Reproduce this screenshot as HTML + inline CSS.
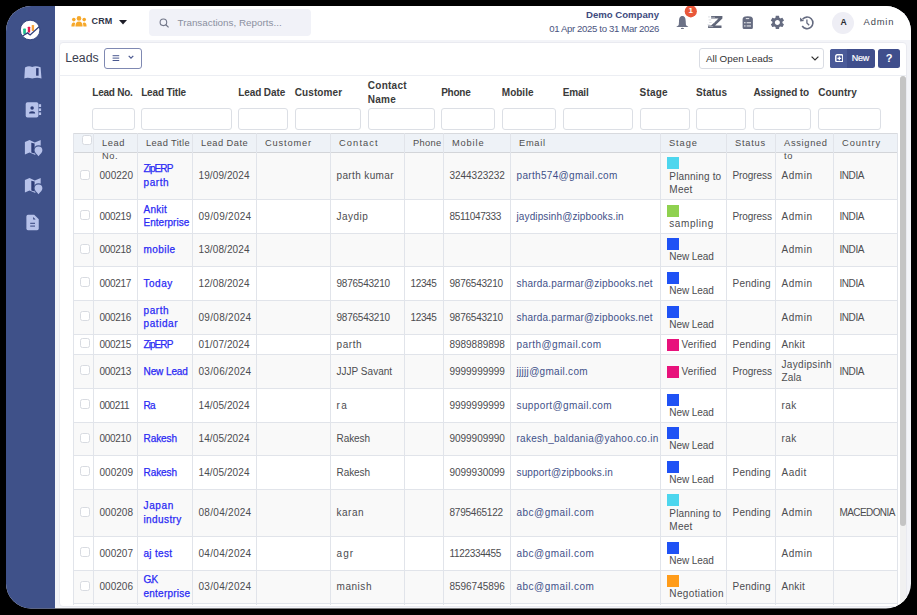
<!DOCTYPE html>
<html><head><meta charset="utf-8">
<style>
html,body{margin:0;padding:0;}
body{width:917px;height:615px;background:#000;overflow:hidden;position:relative;font-family:"Liberation Sans",sans-serif;}
#frame{position:absolute;left:0;top:0;width:917px;height:615px;background:#f3f4f8;clip-path:inset(6px 6px 6.6px 6px round 25px);overflow:hidden;}
#frame div{position:absolute;}
.side{left:0;top:0;width:55px;height:615px;background:#3f5189;}
.hdr{left:55px;top:0;width:862px;height:40px;background:#fff;}
.panel{left:58.5px;top:41.5px;width:848px;height:565px;background:#fff;border:1px solid #e9eaf0;border-radius:4px;box-sizing:border-box;}
.sep{left:59px;top:74.5px;width:847px;height:1px;background:#eceef3;}
.thead{left:73px;width:825px;background:#eef2f7;}
.trow{left:73px;width:825px;}
.hl{left:73px;width:825px;height:1px;background:#e1e4ea;}
.hl.hd{background:#d3d5d9;}
.hl.ht{background:#d8dade;}
.vl{top:133px;width:1px;height:472px;background:#e1e4ea;}
.th{font-size:9.3px;line-height:13.8px;color:#4e4e4e;white-space:nowrap;}
.td{font-size:10px;line-height:13.6px;color:#4c4c50;white-space:nowrap;}
.lk{color:#2a2af4;-webkit-text-stroke:0.25px #2a2af4;}
.em{color:#3f5189;}
.cb{width:10px;height:10px;border:1px solid #d8dbe1;border-radius:2.5px;background:#fff;box-sizing:border-box;}
.sq{width:12px;height:12px;}
.fl{font-size:10px;line-height:13.6px;font-weight:bold;color:#3a3a3a;white-space:nowrap;}
.inp{top:108px;height:21.8px;border:1px solid #dcdfe5;border-radius:3px;box-sizing:border-box;background:#fff;}
.track{left:900px;top:80px;width:5.8px;height:525px;background:#f1f1f1;}
.scroll{left:900px;top:76.4px;width:5.8px;height:449.3px;background:#c4c4c4;border-radius:3px;}
.ico{color:#5b6275;}
</style></head>
<body>
<div id="frame">
  <div class="side"></div>
  <!-- logo -->
  <svg style="position:absolute;left:19px;top:18.5px" width="22" height="22" viewBox="0 0 22 22">
    <circle cx="11.1" cy="11" r="9.8" fill="#fff" stroke="#2f3f7a" stroke-width="0.9"/>
    <rect x="4.2" y="9.6" width="2.7" height="5.3" rx="0.6" fill="#1fc08e"/>
    <rect x="8.8" y="7.7" width="2.4" height="5.9" rx="0.6" fill="#e8174f"/>
    <rect x="12.7" y="6" width="2.4" height="5.9" rx="0.6" fill="#f7a23a"/>
    <path d="M3.6 17 L8.5 13.9 L11.1 15.9 L20.4 7.5" fill="none" stroke="#2f3f7a" stroke-width="1.3"/>
  </svg>
  <!-- sidebar icons -->
  <svg style="position:absolute;left:20px;top:62px" width="26" height="22" viewBox="0 0 26 22">
    <path d="M4.3 16.4 L5 5.4 Q8.9 3.4 12.2 5 Q15.6 3.4 20.6 5.2 L21.5 16.4 Q16.8 15.2 12.2 16.6 Q7.8 15.2 4.3 16.4 Z" fill="#b7c2ea"/>
    <rect x="16.1" y="6.1" width="2.5" height="7.6" fill="#2f3e78"/>
  </svg>
  <svg style="position:absolute;left:20px;top:98px" width="26" height="24" viewBox="0 0 26 24">
    <rect x="5.7" y="4.3" width="12.7" height="15.2" rx="1.8" fill="#b7c2ea"/>
    <rect x="18.8" y="6.2" width="2.3" height="2.8" fill="#b7c2ea"/>
    <rect x="18.8" y="10.4" width="2.3" height="2.6" fill="#b7c2ea"/>
    <rect x="18.8" y="14.4" width="2.3" height="2.6" fill="#b7c2ea"/>
    <circle cx="12.1" cy="10" r="1.75" fill="#2f3e78"/>
    <path d="M9 15.6 Q9.2 13.3 12.1 13.3 Q15 13.3 15.2 15.6 Z" fill="#2f3e78"/>
  </svg>
  <svg style="position:absolute;left:20px;top:136px" width="28" height="24" viewBox="0 0 28 24">
    <path d="M4.9 5.9 L9.5 3.9 L14.8 6.4 L20.7 3.9 L20.7 16 L14.8 18.8 L9.5 16.4 L4.9 18.4 Z" fill="#b7c2ea"/>
    <path d="M11.3 6.8 L14.6 7.6 L14.6 17.4 L11.3 16.6 Z" fill="#2f3e78"/>
    <path d="M18.5 21.4 C16.2 19 13.4 16.8 13.4 14.3 A5.1 5.1 0 1 1 23.6 14.3 C23.6 16.8 20.8 19 18.5 21.4 Z" fill="#3f5189"/>
    <path d="M18.5 20.2 C16.5 18 14.6 16.4 14.6 14.3 A3.9 3.9 0 1 1 22.4 14.3 C22.4 16.4 20.5 18 18.5 20.2 Z" fill="#b7c2ea"/>
  </svg>
  <svg style="position:absolute;left:20px;top:173.5px" width="28" height="24" viewBox="0 0 28 24">
    <path d="M4.9 5.9 L9.5 3.9 L14.8 6.4 L20.7 3.9 L20.7 16 L14.8 18.8 L9.5 16.4 L4.9 18.4 Z" fill="#b7c2ea"/>
    <path d="M11.3 6.8 L14.6 7.6 L14.6 17.4 L11.3 16.6 Z" fill="#2f3e78"/>
    <path d="M18.5 21.4 C16.2 19 13.4 16.8 13.4 14.3 A5.1 5.1 0 1 1 23.6 14.3 C23.6 16.8 20.8 19 18.5 21.4 Z" fill="#3f5189"/>
    <path d="M18.5 20.2 C16.5 18 14.6 16.4 14.6 14.3 A3.9 3.9 0 1 1 22.4 14.3 C22.4 16.4 20.5 18 18.5 20.2 Z" fill="#b7c2ea"/>
  </svg>
  <svg style="position:absolute;left:20px;top:210px" width="26" height="24" viewBox="0 0 26 24">
    <path d="M8 4.7 L14.2 4.7 L18.75 9.2 L18.75 18.6 Q18.75 20.3 17 20.3 L8 20.3 Q6.4 20.3 6.4 18.6 L6.4 6.4 Q6.4 4.7 8 4.7 Z" fill="#b7c2ea"/>
    <path d="M13.2 7 L15.6 9.6 L13.2 9.6 Z" fill="#2f3e78"/>
    <rect x="10.2" y="12.8" width="4.8" height="0.95" fill="#2f3e78"/>
    <rect x="10.2" y="15.6" width="4.8" height="0.95" fill="#2f3e78"/>
  </svg>

  <div class="hdr"></div>
  <!-- CRM -->
  <svg style="position:absolute;left:71px;top:15.5px" width="16" height="11" viewBox="0 0 16 11">
    <circle cx="8" cy="2.4" r="2.3" fill="#f6a82a"/>
    <circle cx="2.8" cy="3.6" r="1.8" fill="#f6a82a"/>
    <circle cx="13.2" cy="3.6" r="1.8" fill="#f6a82a"/>
    <path d="M4.4 10.6 Q4.4 5.6 8 5.6 Q11.6 5.6 11.6 10.6 Z" fill="#f6a82a"/>
    <path d="M0.4 10.6 Q0.4 6.6 2.8 6.6 Q3.8 6.6 4.2 7.2 Q3.6 8.4 3.6 10.6 Z" fill="#f6a82a"/>
    <path d="M15.6 10.6 Q15.6 6.6 13.2 6.6 Q12.2 6.6 11.8 7.2 Q12.4 8.4 12.4 10.6 Z" fill="#f6a82a"/>
  </svg>
  <div style="left:91.6px;top:15.4px;font-size:9px;font-weight:bold;color:#2f3547;line-height:13px;letter-spacing:0.1px">CRM</div>
  <svg style="position:absolute;left:119px;top:19.5px" width="8" height="5" viewBox="0 0 8 5"><path d="M0 0 L8 0 L4 4.6 Z" fill="#1d1d28"/></svg>
  <!-- search -->
  <div style="left:149px;top:9px;width:162px;height:26.6px;background:#f1f2f8;border-radius:4px"></div>
  <svg style="position:absolute;left:159px;top:18px" width="11" height="10" viewBox="0 0 11 10">
    <circle cx="4.4" cy="4.3" r="3.3" fill="none" stroke="#727789" stroke-width="1.1"/>
    <path d="M6.8 6.7 L9.6 9.4" stroke="#727789" stroke-width="1.2"/>
  </svg>
  <div style="left:177.5px;top:15.8px;font-size:9.85px;color:#8b90a0;line-height:13px">Transactions, Reports...</div>
  <!-- company -->
  <div style="left:585px;top:9.4px;width:74px;text-align:right;font-size:9.6px;font-weight:bold;color:#3d4a7e;line-height:12px;white-space:nowrap">Demo Company</div>
  <div style="left:549px;top:22.6px;width:110px;text-align:right;font-size:9.6px;color:#4a5480;line-height:12px;white-space:nowrap;letter-spacing:-0.35px">01 Apr 2025 to 31 Mar 2026</div>
  <!-- bell -->
  <svg style="position:absolute;left:672px;top:4px" width="30" height="30" viewBox="0 0 30 30">
    <path d="M10.35 11.9 C7.7 11.9 7.1 14.4 7 17 L6.8 20.4 C6.7 21.5 5.5 22 4.6 22.5 L4.6 22.9 L16.1 22.9 L16.1 22.5 C15.2 22 14 21.5 13.9 20.4 L13.7 17 C13.6 14.4 13 11.9 10.35 11.9 Z" fill="#6b7186"/>
    <ellipse cx="10.4" cy="24.4" rx="1.6" ry="0.55" fill="#6b7186"/>
    <circle cx="18.8" cy="7.3" r="6.1" fill="#e9573a"/>
  </svg>
  <div style="left:684.8px;top:5.4px;width:12px;text-align:center;color:#fff;font-size:8px;font-weight:bold;line-height:12px">1</div>
  <!-- Z icon -->
  <svg style="position:absolute;left:702px;top:10px" width="28" height="24" viewBox="0 0 28 24">
    <path d="M9.1 6.1 L20.4 6.1 L20.4 8.5 L13.1 15.5 L19.5 15.5 L19.5 18 L6.1 18 L6.1 15.5 L9.1 15.5 L16.5 8.5 L9.1 8.5 Z" fill="#5f6578"/>
    <rect x="8.6" y="6.9" width="4.4" height="0.55" fill="#fff" opacity="0.8"/>
    <rect x="6.6" y="16.5" width="4.6" height="0.55" fill="#fff" opacity="0.8"/>
    <rect x="11" y="10.6" width="3.6" height="0.5" fill="#fff" opacity="0.7"/>
    <rect x="9.4" y="12.6" width="3.6" height="0.5" fill="#fff" opacity="0.7"/>
    <rect x="6" y="6.6" width="2.2" height="0.7" fill="#c9ccd4"/>
    <rect x="6.6" y="9.6" width="2.6" height="0.7" fill="#c9ccd4"/>
    <rect x="7.2" y="12.2" width="2.4" height="0.7" fill="#c9ccd4"/>
    <rect x="5.4" y="14.4" width="2.4" height="0.7" fill="#d5d7de"/>
  </svg>
  <!-- calculator -->
  <svg style="position:absolute;left:742px;top:15.5px" width="11.5" height="14" viewBox="0 0 11.5 14">
    <path d="M0.6 3.6 Q0.6 0.8 3.4 0.5 Q5.75 0.1 8.1 0.5 Q10.9 0.8 10.9 3.6 L10.9 11.6 Q10.9 13.1 9.4 13.1 L2.1 13.1 Q0.6 13.1 0.6 11.6 Z" fill="#656b80"/>
    <rect x="3.8" y="2.1" width="3.4" height="1" fill="#fff" opacity="0.85"/>
    <rect x="2" y="6.2" width="1.6" height="1.1" fill="#fff" opacity="0.85"/>
    <rect x="4.6" y="6.2" width="4.4" height="1.1" fill="#fff" opacity="0.85"/>
    <rect x="2" y="9.4" width="1.6" height="1.1" fill="#fff" opacity="0.85"/>
    <rect x="4.6" y="9.4" width="4.4" height="1.1" fill="#fff" opacity="0.85"/>
  </svg>
  <!-- gear -->
  <svg style="position:absolute;left:768.7px;top:14.3px" width="16.8" height="16.8" viewBox="0 0 24 24">
    <path fill="#656b80" d="M19.14 12.94c.04-.3.06-.61.06-.94 0-.32-.02-.64-.07-.94l2.03-1.58a.49.49 0 0 0 .12-.61l-1.92-3.32a.488.488 0 0 0-.59-.22l-2.39.96c-.5-.38-1.03-.7-1.62-.94l-.36-2.54a.484.484 0 0 0-.48-.41h-3.84c-.24 0-.43.17-.47.41l-.36 2.54c-.59.24-1.13.57-1.62.94l-2.39-.96c-.22-.08-.47 0-.59.22L2.74 8.87c-.12.21-.08.47.12.61l2.03 1.58c-.05.3-.09.63-.09.94s.02.64.07.94l-2.03 1.58a.49.49 0 0 0-.12.61l1.92 3.32c.12.22.37.29.59.22l2.39-.96c.5.38 1.03.7 1.62.94l.36 2.54c.05.24.24.41.48.41h3.84c.24 0 .44-.17.47-.41l.36-2.54c.59-.24 1.13-.56 1.62-.94l2.39.96c.22.08.47 0 .59-.22l1.92-3.32c.12-.22.07-.47-.12-.61l-2.01-1.58zM12 15.6c-1.98 0-3.6-1.62-3.6-3.6s1.62-3.6 3.6-3.6 3.6 1.62 3.6 3.6-1.62 3.6-3.6 3.6z"/>
  </svg>
  <!-- history -->
  <svg style="position:absolute;left:799px;top:15px" width="15" height="15" viewBox="0 0 15 15">
    <path d="M3.6 4.2 A5.8 5.8 0 1 1 3.2 11" fill="none" stroke="#656b80" stroke-width="1.6"/>
    <path d="M1 2.6 L1.2 6.6 L5.2 6 Z" fill="#656b80"/>
    <path d="M7.9 4.6 L7.9 8 L10.2 10.2" fill="none" stroke="#656b80" stroke-width="1.3"/>
  </svg>
  <!-- avatar -->
  <div style="left:832px;top:11.5px;width:22px;height:22px;border-radius:50%;background:#eeeef5"></div>
  <div style="left:832.6px;top:16.3px;width:22px;text-align:center;font-size:8.6px;font-weight:bold;color:#2a2a30;line-height:12px">A</div>
  <div style="left:863.6px;top:15.9px;font-size:9.4px;color:#42464f;line-height:12px;letter-spacing:0.8px">Admin</div>

  <div class="panel"></div>
  <div style="left:65.2px;top:50.9px;font-size:12.3px;color:#3a4050;line-height:14px;letter-spacing:0px">Leads</div>
  <div style="left:104px;top:48.3px;width:38px;height:20.3px;border:1.3px solid #7f89b2;border-radius:3px;box-sizing:border-box"></div>
  <svg style="position:absolute;left:111.5px;top:54.1px" width="8" height="8" viewBox="0 0 8 8">
    <rect x="0.6" y="1.2" width="6.6" height="1" fill="#4a5890"/>
    <rect x="0.6" y="3.6" width="6.6" height="1" fill="#4a5890"/>
    <rect x="0.6" y="6" width="6.6" height="1" fill="#4a5890"/>
  </svg>
  <svg style="position:absolute;left:127.6px;top:55.4px" width="6" height="4.4" viewBox="0 0 6 4.4"><path d="M0.7 0.8 L3 3.2 L5.3 0.8" fill="none" stroke="#4a5890" stroke-width="1.2"/></svg>

  <!-- select -->
  <div style="left:699.4px;top:48.2px;width:125px;height:20.5px;border:1px solid #d9dce3;border-radius:3px;box-sizing:border-box;background:#fff"></div>
  <div style="left:706px;top:51.5px;font-size:9.8px;color:#333;line-height:13px">All Open Leads</div>
  <svg style="position:absolute;left:810.5px;top:55.5px" width="8" height="5" viewBox="0 0 8 5"><path d="M0.6 0.6 L4 4 L7.4 0.6" fill="none" stroke="#333" stroke-width="1.2"/></svg>
  <!-- New button -->
  <div style="left:830px;top:49px;width:45px;height:18.7px;background:#3f4e8c;border-radius:2.5px"></div>
  <div style="left:830px;top:49px;width:17px;height:18.7px;background:#4a5a98;border-radius:2.5px 0 0 2.5px"></div>
  <svg style="position:absolute;left:834.8px;top:53.8px" width="8.6" height="8.6" viewBox="0 0 10 10">
    <rect x="0.9" y="0.9" width="8.2" height="8.2" rx="1.6" fill="none" stroke="#fff" stroke-width="1.7"/>
    <path d="M5 2.8 L5 7.2 M2.8 5 L7.2 5" stroke="#fff" stroke-width="1.5"/>
  </svg>
  <div style="left:851.8px;top:52.4px;font-size:9px;color:#fff;line-height:12px;letter-spacing:-0.3px;-webkit-text-stroke:0.2px #fff">New</div>
  <div style="left:878px;top:49px;width:22.4px;height:18.7px;background:#3f4e8c;border-radius:2.5px;color:#fff;font-size:11px;font-weight:bold;text-align:center;line-height:18.7px">?</div>
  <div class="sep"></div>

<div class="thead" style="top:133px;height:19px"></div>
<div class="trow" style="top:153px;height:46px;background:#f9f9f9"></div>
<div class="trow" style="top:200px;height:33px;background:#ffffff"></div>
<div class="trow" style="top:234px;height:32px;background:#f9f9f9"></div>
<div class="trow" style="top:267px;height:33px;background:#ffffff"></div>
<div class="trow" style="top:301px;height:33px;background:#f9f9f9"></div>
<div class="trow" style="top:335px;height:19px;background:#ffffff"></div>
<div class="trow" style="top:355px;height:33px;background:#f9f9f9"></div>
<div class="trow" style="top:389px;height:33px;background:#ffffff"></div>
<div class="trow" style="top:423px;height:32px;background:#f9f9f9"></div>
<div class="trow" style="top:456px;height:33px;background:#ffffff"></div>
<div class="trow" style="top:490px;height:46px;background:#f9f9f9"></div>
<div class="trow" style="top:537px;height:33px;background:#ffffff"></div>
<div class="trow" style="top:571px;height:32px;background:#f9f9f9"></div>
<div class="hl ht" style="top:133px"></div>
<div class="hl hd" style="top:152px"></div>
<div class="hl" style="top:199px"></div>
<div class="hl" style="top:233px"></div>
<div class="hl" style="top:266px"></div>
<div class="hl" style="top:300px"></div>
<div class="hl" style="top:334px"></div>
<div class="hl" style="top:354px"></div>
<div class="hl" style="top:388px"></div>
<div class="hl" style="top:422px"></div>
<div class="hl" style="top:455px"></div>
<div class="hl" style="top:489px"></div>
<div class="hl" style="top:536px"></div>
<div class="hl" style="top:570px"></div>
<div class="hl" style="top:603px"></div>
<div class="vl" style="left:73px"></div>
<div class="vl" style="left:93px"></div>
<div class="vl" style="left:137px"></div>
<div class="vl" style="left:192px"></div>
<div class="vl" style="left:256px"></div>
<div class="vl" style="left:330px"></div>
<div class="vl" style="left:404px"></div>
<div class="vl" style="left:443px"></div>
<div class="vl" style="left:510px"></div>
<div class="vl" style="left:660px"></div>
<div class="vl" style="left:726px"></div>
<div class="vl" style="left:775px"></div>
<div class="vl" style="left:833px"></div>
<div class="vl" style="left:897px"></div>
<div class="th" style="left:102px;top:136.6px;letter-spacing:0.604px">Lead<br>No.</div>
<div class="th" style="left:146px;top:136.6px;letter-spacing:0.375px">Lead Title</div>
<div class="th" style="left:201px;top:136.6px;letter-spacing:0.462px">Lead Date</div>
<div class="th" style="left:265px;top:136.6px;letter-spacing:0.841px">Customer</div>
<div class="th" style="left:339px;top:136.6px;letter-spacing:1.109px">Contact</div>
<div class="th" style="left:413px;top:136.6px;letter-spacing:0.3px">Phone</div>
<div class="th" style="left:452px;top:136.6px;letter-spacing:0.842px">Mobile</div>
<div class="th" style="left:519px;top:136.6px;letter-spacing:0.713px">Email</div>
<div class="th" style="left:669px;top:136.6px;letter-spacing:0.901px">Stage</div>
<div class="th" style="left:735px;top:136.6px;letter-spacing:0.768px">Status</div>
<div class="th" style="left:784px;top:136.6px;letter-spacing:0.679px">Assigned<br>to</div>
<div class="th" style="left:842px;top:136.6px;letter-spacing:0.940px">Country</div>
<div class="cb" style="left:82px;top:135px;width:10px;height:10px"></div>
<div class="cb" style="left:80px;top:169.60px"></div>
<div class="td" style="left:99.5px;top:169.10px;"><span style="letter-spacing:0.025px">000220</span></div>
<div class="td lk" style="left:143.5px;top:162.30px;"><span style="letter-spacing:-0.931px">ZipERP</span><br><span style="letter-spacing:0.576px">parth</span></div>
<div class="td" style="left:198.5px;top:169.10px;"><span style="letter-spacing:0.104px">19/09/2024</span></div>
<div class="td" style="left:336.5px;top:169.10px;"><span style="letter-spacing:0.374px">parth kumar</span></div>
<div class="td" style="left:449.5px;top:169.10px;"><span style="letter-spacing:-0.036px">3244323232</span></div>
<div class="td em" style="left:516.5px;top:169.10px;"><span style="letter-spacing:0.329px">parth574@gmail.com</span></div>
<div class="sq" style="left:666.7px;top:157.30px;background:#4dd6ee"></div>
<div class="td" style="left:669.3px;top:169.60px"><span style="letter-spacing:0.185px">Planning to</span><br><span style="letter-spacing:0.255px">Meet</span></div>
<div class="td" style="left:732.5px;top:169.10px;"><span style="letter-spacing:-0.074px">Progress</span></div>
<div class="td" style="left:781.5px;top:169.10px;"><span style="letter-spacing:0.535px">Admin</span></div>
<div class="td" style="left:839.5px;top:169.10px;"><span style="letter-spacing:-0.443px">INDIA</span></div>
<div class="cb" style="left:80px;top:210.10px"></div>
<div class="td" style="left:99.5px;top:209.60px;"><span style="letter-spacing:-0.315px">000219</span></div>
<div class="td lk" style="left:143.5px;top:202.80px;"><span style="letter-spacing:0.241px">Ankit</span><br><span style="letter-spacing:0.014px">Enterprise</span></div>
<div class="td" style="left:198.5px;top:209.60px;"><span style="letter-spacing:0.293px">09/09/2024</span></div>
<div class="td" style="left:336.5px;top:209.60px;"><span style="letter-spacing:0.459px">Jaydip</span></div>
<div class="td" style="left:449.5px;top:209.60px;"><span style="letter-spacing:-0.331px">8511047333</span></div>
<div class="td em" style="left:516.5px;top:209.60px;"><span style="letter-spacing:0.116px">jaydipsinh@zipbooks.in</span></div>
<div class="sq" style="left:666.7px;top:204.60px;background:#8fd14f"></div>
<div class="td" style="left:669.3px;top:216.90px"><span style="letter-spacing:0.567px">sampling</span></div>
<div class="td" style="left:732.5px;top:209.60px;"><span style="letter-spacing:-0.074px">Progress</span></div>
<div class="td" style="left:781.5px;top:209.60px;"><span style="letter-spacing:0.535px">Admin</span></div>
<div class="td" style="left:839.5px;top:209.60px;"><span style="letter-spacing:-0.443px">INDIA</span></div>
<div class="cb" style="left:80px;top:243.60px"></div>
<div class="td" style="left:99.5px;top:243.10px;"><span style="letter-spacing:-0.315px">000218</span></div>
<div class="td lk" style="left:143.5px;top:243.10px;"><span style="letter-spacing:0.426px">mobile</span></div>
<div class="td" style="left:198.5px;top:243.10px;"><span style="letter-spacing:0.104px">13/08/2024</span></div>
<div class="sq" style="left:666.7px;top:238.10px;background:#1f52f5"></div>
<div class="td" style="left:669.3px;top:250.40px"><span style="letter-spacing:-0.090px">New Lead</span></div>
<div class="td" style="left:781.5px;top:243.10px;"><span style="letter-spacing:0.535px">Admin</span></div>
<div class="td" style="left:839.5px;top:243.10px;"><span style="letter-spacing:-0.443px">INDIA</span></div>
<div class="cb" style="left:80px;top:277.10px"></div>
<div class="td" style="left:99.5px;top:276.60px;"><span style="letter-spacing:-0.315px">000217</span></div>
<div class="td lk" style="left:143.5px;top:276.60px;"><span style="letter-spacing:0.528px">Today</span></div>
<div class="td" style="left:198.5px;top:276.60px;"><span style="letter-spacing:0.104px">12/08/2024</span></div>
<div class="td" style="left:336.5px;top:276.60px;"><span style="letter-spacing:-0.225px">9876543210</span></div>
<div class="td" style="left:410.5px;top:276.60px;"><span style="letter-spacing:-0.366px">12345</span></div>
<div class="td" style="left:449.5px;top:276.60px;"><span style="letter-spacing:-0.225px">9876543210</span></div>
<div class="td em" style="left:516.5px;top:276.60px;"><span style="letter-spacing:0.191px">sharda.parmar@zipbooks.net</span></div>
<div class="sq" style="left:666.7px;top:271.60px;background:#1f52f5"></div>
<div class="td" style="left:669.3px;top:283.90px"><span style="letter-spacing:-0.090px">New Lead</span></div>
<div class="td" style="left:732.5px;top:276.60px;"><span style="letter-spacing:0.216px">Pending</span></div>
<div class="td" style="left:781.5px;top:276.60px;"><span style="letter-spacing:0.535px">Admin</span></div>
<div class="td" style="left:839.5px;top:276.60px;"><span style="letter-spacing:-0.443px">INDIA</span></div>
<div class="cb" style="left:80px;top:311.10px"></div>
<div class="td" style="left:99.5px;top:310.60px;"><span style="letter-spacing:-0.315px">000216</span></div>
<div class="td lk" style="left:143.5px;top:303.80px;"><span style="letter-spacing:0.576px">parth</span><br><span style="letter-spacing:0.587px">patidar</span></div>
<div class="td" style="left:198.5px;top:310.60px;"><span style="letter-spacing:0.293px">09/08/2024</span></div>
<div class="td" style="left:336.5px;top:310.60px;"><span style="letter-spacing:-0.225px">9876543210</span></div>
<div class="td" style="left:410.5px;top:310.60px;"><span style="letter-spacing:-0.366px">12345</span></div>
<div class="td" style="left:449.5px;top:310.60px;"><span style="letter-spacing:-0.225px">9876543210</span></div>
<div class="td em" style="left:516.5px;top:310.60px;"><span style="letter-spacing:0.191px">sharda.parmar@zipbooks.net</span></div>
<div class="sq" style="left:666.7px;top:305.60px;background:#1f52f5"></div>
<div class="td" style="left:669.3px;top:317.90px"><span style="letter-spacing:-0.090px">New Lead</span></div>
<div class="td" style="left:781.5px;top:310.60px;"><span style="letter-spacing:0.535px">Admin</span></div>
<div class="td" style="left:839.5px;top:310.60px;"><span style="letter-spacing:-0.443px">INDIA</span></div>
<div class="cb" style="left:80px;top:338.10px"></div>
<div class="td" style="left:99.5px;top:337.60px;"><span style="letter-spacing:-0.315px">000215</span></div>
<div class="td lk" style="left:143.5px;top:337.60px;"><span style="letter-spacing:-0.931px">ZipERP</span></div>
<div class="td" style="left:198.5px;top:337.60px;"><span style="letter-spacing:0.104px">01/07/2024</span></div>
<div class="td" style="left:336.5px;top:337.60px;"><span style="letter-spacing:0.576px">parth</span></div>
<div class="td" style="left:449.5px;top:337.60px;"><span style="letter-spacing:-0.036px">8989889898</span></div>
<div class="td em" style="left:516.5px;top:337.60px;"><span style="letter-spacing:0.427px">parth@gmail.com</span></div>
<div class="sq" style="left:666.7px;top:339.30px;background:#e8127c"></div>
<div class="td" style="left:681.5px;top:337.60px"><span style="letter-spacing:0.192px">Verified</span></div>
<div class="td" style="left:732.5px;top:337.60px;"><span style="letter-spacing:0.216px">Pending</span></div>
<div class="td" style="left:781.5px;top:337.60px;"><span style="letter-spacing:0.241px">Ankit</span></div>
<div class="cb" style="left:80px;top:365.10px"></div>
<div class="td" style="left:99.5px;top:364.60px;"><span style="letter-spacing:-0.315px">000213</span></div>
<div class="td lk" style="left:143.5px;top:364.60px;"><span style="letter-spacing:-0.090px">New Lead</span></div>
<div class="td" style="left:198.5px;top:364.60px;"><span style="letter-spacing:0.293px">03/06/2024</span></div>
<div class="td" style="left:336.5px;top:364.60px;"><span style="letter-spacing:0.019px">JJJP Savant</span></div>
<div class="td" style="left:449.5px;top:364.60px;"><span style="letter-spacing:-0.036px">9999999999</span></div>
<div class="td em" style="left:516.5px;top:364.60px;"><span style="letter-spacing:0.305px">jjjjj@gmail.com</span></div>
<div class="sq" style="left:666.7px;top:366.30px;background:#e8127c"></div>
<div class="td" style="left:681.5px;top:364.60px"><span style="letter-spacing:0.192px">Verified</span></div>
<div class="td" style="left:732.5px;top:364.60px;"><span style="letter-spacing:-0.074px">Progress</span></div>
<div class="td" style="left:781.5px;top:357.80px;"><span style="letter-spacing:0.326px">Jaydipsinh</span><br><span style="letter-spacing:0.116px">Zala</span></div>
<div class="td" style="left:839.5px;top:364.60px;"><span style="letter-spacing:-0.443px">INDIA</span></div>
<div class="cb" style="left:80px;top:399.10px"></div>
<div class="td" style="left:99.5px;top:398.60px;"><span style="letter-spacing:-0.508px">000211</span></div>
<div class="td lk" style="left:143.5px;top:398.60px;"><span style="letter-spacing:-0.797px">Ra</span></div>
<div class="td" style="left:198.5px;top:398.60px;"><span style="letter-spacing:0.104px">14/05/2024</span></div>
<div class="td" style="left:336.5px;top:398.60px;"><span style="letter-spacing:1.494px">ra</span></div>
<div class="td" style="left:449.5px;top:398.60px;"><span style="letter-spacing:-0.036px">9999999999</span></div>
<div class="td em" style="left:516.5px;top:398.60px;"><span style="letter-spacing:0.376px">support@gmail.com</span></div>
<div class="sq" style="left:666.7px;top:393.60px;background:#1f52f5"></div>
<div class="td" style="left:669.3px;top:405.90px"><span style="letter-spacing:-0.090px">New Lead</span></div>
<div class="td" style="left:781.5px;top:398.60px;"><span style="letter-spacing:0.447px">rak</span></div>
<div class="cb" style="left:80px;top:432.60px"></div>
<div class="td" style="left:99.5px;top:432.10px;"><span style="letter-spacing:-0.315px">000210</span></div>
<div class="td lk" style="left:143.5px;top:432.10px;"><span style="letter-spacing:-0.061px">Rakesh</span></div>
<div class="td" style="left:198.5px;top:432.10px;"><span style="letter-spacing:0.104px">14/05/2024</span></div>
<div class="td" style="left:336.5px;top:432.10px;"><span style="letter-spacing:-0.061px">Rakesh</span></div>
<div class="td" style="left:449.5px;top:432.10px;"><span style="letter-spacing:-0.036px">9099909990</span></div>
<div class="td em" style="left:516.5px;top:432.10px;"><span style="letter-spacing:0.274px">rakesh_baldania@yahoo.co.in</span></div>
<div class="sq" style="left:666.7px;top:427.10px;background:#1f52f5"></div>
<div class="td" style="left:669.3px;top:439.40px"><span style="letter-spacing:-0.090px">New Lead</span></div>
<div class="td" style="left:781.5px;top:432.10px;"><span style="letter-spacing:0.447px">rak</span></div>
<div class="cb" style="left:80px;top:466.10px"></div>
<div class="td" style="left:99.5px;top:465.60px;"><span style="letter-spacing:0.025px">000209</span></div>
<div class="td lk" style="left:143.5px;top:465.60px;"><span style="letter-spacing:-0.061px">Rakesh</span></div>
<div class="td" style="left:198.5px;top:465.60px;"><span style="letter-spacing:0.104px">14/05/2024</span></div>
<div class="td" style="left:336.5px;top:465.60px;"><span style="letter-spacing:-0.061px">Rakesh</span></div>
<div class="td" style="left:449.5px;top:465.60px;"><span style="letter-spacing:-0.036px">9099930099</span></div>
<div class="td em" style="left:516.5px;top:465.60px;"><span style="letter-spacing:0.153px">support@zipbooks.in</span></div>
<div class="sq" style="left:666.7px;top:460.60px;background:#1f52f5"></div>
<div class="td" style="left:669.3px;top:472.90px"><span style="letter-spacing:-0.090px">New Lead</span></div>
<div class="td" style="left:732.5px;top:465.60px;"><span style="letter-spacing:0.216px">Pending</span></div>
<div class="td" style="left:781.5px;top:465.60px;"><span style="letter-spacing:0.501px">Aadit</span></div>
<div class="cb" style="left:80px;top:506.60px"></div>
<div class="td" style="left:99.5px;top:506.10px;"><span style="letter-spacing:0.025px">000208</span></div>
<div class="td lk" style="left:143.5px;top:499.30px;"><span style="letter-spacing:0.638px">Japan</span><br><span style="letter-spacing:0.398px">industry</span></div>
<div class="td" style="left:198.5px;top:506.10px;"><span style="letter-spacing:0.293px">08/04/2024</span></div>
<div class="td" style="left:336.5px;top:506.10px;"><span style="letter-spacing:0.521px">karan</span></div>
<div class="td" style="left:449.5px;top:506.10px;"><span style="letter-spacing:-0.225px">8795465122</span></div>
<div class="td em" style="left:516.5px;top:506.10px;"><span style="letter-spacing:0.463px">abc@gmail.com</span></div>
<div class="sq" style="left:666.7px;top:494.30px;background:#4dd6ee"></div>
<div class="td" style="left:669.3px;top:506.60px"><span style="letter-spacing:0.185px">Planning to</span><br><span style="letter-spacing:0.255px">Meet</span></div>
<div class="td" style="left:732.5px;top:506.10px;"><span style="letter-spacing:0.216px">Pending</span></div>
<div class="td" style="left:781.5px;top:506.10px;"><span style="letter-spacing:0.535px">Admin</span></div>
<div class="td" style="left:839.5px;top:506.10px;"><span style="letter-spacing:-0.595px">MACEDONIA</span></div>
<div class="cb" style="left:80px;top:547.10px"></div>
<div class="td" style="left:99.5px;top:546.60px;"><span style="letter-spacing:0.025px">000207</span></div>
<div class="td lk" style="left:143.5px;top:546.60px;"><span style="letter-spacing:0.302px">aj test</span></div>
<div class="td" style="left:198.5px;top:546.60px;"><span style="letter-spacing:0.293px">04/04/2024</span></div>
<div class="td" style="left:336.5px;top:546.60px;"><span style="letter-spacing:1.073px">agr</span></div>
<div class="td" style="left:449.5px;top:546.60px;"><span style="letter-spacing:-0.331px">1122334455</span></div>
<div class="td em" style="left:516.5px;top:546.60px;"><span style="letter-spacing:0.463px">abc@gmail.com</span></div>
<div class="sq" style="left:666.7px;top:541.60px;background:#1f52f5"></div>
<div class="td" style="left:669.3px;top:553.90px"><span style="letter-spacing:-0.090px">New Lead</span></div>
<div class="td" style="left:781.5px;top:546.60px;"><span style="letter-spacing:0.535px">Admin</span></div>
<div class="cb" style="left:80px;top:580.60px"></div>
<div class="td" style="left:99.5px;top:580.10px;"><span style="letter-spacing:0.025px">000206</span></div>
<div class="td lk" style="left:143.5px;top:573.30px;"><span style="letter-spacing:-1.217px">G.K</span><br><span style="letter-spacing:0.237px">enterprise</span></div>
<div class="td" style="left:198.5px;top:580.10px;"><span style="letter-spacing:0.293px">03/04/2024</span></div>
<div class="td" style="left:336.5px;top:580.10px;"><span style="letter-spacing:0.550px">manish</span></div>
<div class="td" style="left:449.5px;top:580.10px;"><span style="letter-spacing:-0.036px">8596745896</span></div>
<div class="td em" style="left:516.5px;top:580.10px;"><span style="letter-spacing:0.463px">abc@gmail.com</span></div>
<div class="sq" style="left:666.7px;top:575.10px;background:#ff9c1a"></div>
<div class="td" style="left:669.3px;top:587.40px"><span style="letter-spacing:0.371px">Negotiation</span></div>
<div class="td" style="left:732.5px;top:580.10px;"><span style="letter-spacing:0.216px">Pending</span></div>
<div class="td" style="left:781.5px;top:580.10px;"><span style="letter-spacing:0.241px">Ankit</span></div>
<div class="fl" style="left:92.3px;top:85.90px;letter-spacing:-0.233px">Lead No.</div>
<div class="inp" style="left:92.3px;width:42.7px"></div>
<div class="fl" style="left:141.2px;top:85.90px;letter-spacing:-0.178px">Lead Title</div>
<div class="inp" style="left:141.2px;width:90.4px"></div>
<div class="fl" style="left:238.2px;top:85.90px;letter-spacing:-0.087px">Lead Date</div>
<div class="inp" style="left:238.2px;width:50.1px"></div>
<div class="fl" style="left:294.8px;top:85.90px;letter-spacing:0.087px">Customer</div>
<div class="inp" style="left:294.8px;width:66.2px"></div>
<div class="fl" style="left:367.8px;top:79.10px;letter-spacing:0.261px">Contact<br>Name</div>
<div class="inp" style="left:367.8px;width:66.8px"></div>
<div class="fl" style="left:441.2px;top:85.90px;letter-spacing:-0.241px">Phone</div>
<div class="inp" style="left:441.2px;width:53.5px"></div>
<div class="fl" style="left:501.8px;top:85.90px;letter-spacing:0.006px">Mobile</div>
<div class="inp" style="left:501.8px;width:54.5px"></div>
<div class="fl" style="left:562.7px;top:85.90px;letter-spacing:-0.147px">Email</div>
<div class="inp" style="left:562.7px;width:70.7px"></div>
<div class="fl" style="left:639.6px;top:85.90px;letter-spacing:0.166px">Stage</div>
<div class="inp" style="left:639.6px;width:50.0px"></div>
<div class="fl" style="left:696px;top:85.90px;letter-spacing:0.087px">Status</div>
<div class="inp" style="left:696px;width:50.2px"></div>
<div class="fl" style="left:753.4px;top:85.90px;letter-spacing:-0.153px">Assigned to</div>
<div class="inp" style="left:753.4px;width:58.0px"></div>
<div class="fl" style="left:818.3px;top:85.90px;letter-spacing:0.026px">Country</div>
<div class="inp" style="left:818.3px;width:62.3px"></div>
  <div class="track"></div>
  <div class="scroll"></div>
</div>
</body></html>
